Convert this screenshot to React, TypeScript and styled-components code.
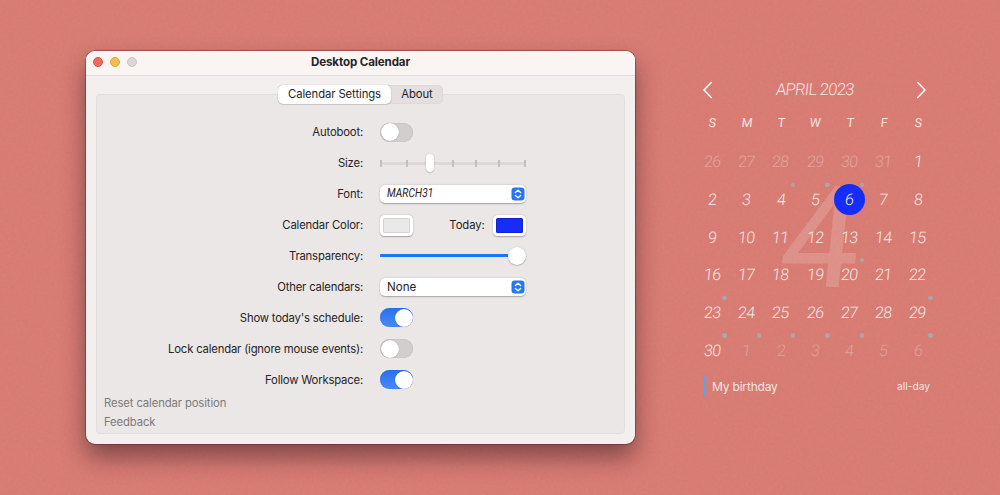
import React from 'react';
import styled, { createGlobalStyle } from 'styled-components';

const GlobalStyle = createGlobalStyle`
  * { box-sizing: border-box; }
  body { margin: 0; background: #d67970; }
`;

const Desktop = styled.main`
  position: relative;
  isolation: isolate;
  display: flex;
  align-items: flex-start;
  width: 1000px;
  height: 495px;
  padding-left: 86px;
  overflow: hidden;
  background: #d97a71;
  font-family: Inter, "Liberation Sans", sans-serif;
`;

const Grain = styled.svg`
  position: absolute;
  inset: 0;
  z-index: -1;
  width: 100%;
  height: 100%;
  opacity: 0.07;
`;

/* ---------- settings window ---------- */

const Window = styled.section`
  width: 549px;
  height: 393px;
  margin-top: 50.5px;
  flex: none;
  border-radius: 9px;
  background: #f3efee;
  box-shadow: 0 0 0 0.5px rgba(90, 20, 10, 0.6), 0 0 2px rgba(70, 10, 5, 0.3),
    0 13px 24px rgba(30, 15, 20, 0.48);
  color: #262425;
  font-size: 11.3px;
  letter-spacing: -0.18px;
`;

const TitleBar = styled.header`
  display: grid;
  grid-template-columns: 60px 1fr 60px;
  align-items: center;
  height: 25px;
  padding: 0 0 1px;
  border-bottom: 1px solid #e1dcdb;
  border-radius: 9px 9px 0 0;
  background: #faf5f2;
`;

const Lights = styled.div`
  display: flex;
  gap: 7px;
  padding-left: 6.5px;
`;

const Light = styled.span<{ $color: string; $edge: string }>`
  width: 10.3px;
  height: 10.3px;
  border-radius: 50%;
  border: 0.5px solid ${p => p.$edge};
  background: ${p => p.$color};
`;

const Title = styled.h1`
  margin: 0;
  text-align: center;
  font-size: 11.6px;
  font-weight: 700;
  letter-spacing: -0.13px;
`;

const Tabs = styled.div`
  display: flex;
  position: relative;
  width: 165px;
  height: 19px;
  margin: 9px 0 0 192px;
  border-radius: 5px;
  background: #e4dfde;
  box-shadow: inset 0 0 0 0.5px #d8d3d2;
`;

const Tab = styled.button<{ $active?: boolean; $width: number }>`
  width: ${p => p.$width}px;
  padding: 0;
  border: 0;
  border-radius: 5px;
  background: ${p => (p.$active ? '#fff' : 'transparent')};
  box-shadow: ${p => (p.$active ? '0 0 1px rgba(0,0,0,.35), 0 1px 1px rgba(0,0,0,.12)' : 'none')};
  color: #1f1e1f;
  font: inherit;
  letter-spacing: -0.1px;
`;

const Panel = styled.div`
  width: 529px;
  height: 340px;
  margin: -10px 0 0 10px;
  padding-top: 22.5px;
  border: 1px solid #e2dedd;
  border-radius: 4px;
  background: #ebe7e6;
`;

const Row = styled.div`
  display: grid;
  grid-template-columns: 266px 146px;
  column-gap: 17px;
  align-items: center;
  height: 30.9px;
`;

const Label = styled.label`
  text-align: right;
  white-space: nowrap;
`;

const Switch = styled.span<{ $on?: boolean }>`
  display: flex;
  justify-content: ${p => (p.$on ? 'flex-end' : 'flex-start')};
  width: 33px;
  height: 19px;
  padding: 0.5px;
  border-radius: 10px;
  background: ${p => (p.$on ? 'linear-gradient(#2a70ee, #478af7)' : '#d2cecd')};
  box-shadow: inset 0 0 1px ${p => (p.$on ? '#1558d4' : '#aaa5a4')};
  &::after {
    content: '';
    width: 18px;
    height: 18px;
    border-radius: 50%;
    background: #fff;
    box-shadow: 0 0 1px rgba(0, 0, 0, 0.4);
  }
`;

const StepTrack = styled.div`
  position: relative;
  display: flex;
  align-items: center;
  justify-content: space-between;
  height: 18px;
  background: linear-gradient(#dcd8d7, #dcd8d7) center / 100% 3px no-repeat;
`;

const Tick = styled.i`
  width: 1.6px;
  height: 7px;
  background: #c3bfbe;
  &:first-child { margin-right: 3px; }
  &:nth-child(7) { margin-left: 3px; }
`;

const StepThumb = styled.span`
  position: absolute;
  left: 46px;
  top: 0;
  width: 8px;
  height: 18px;
  border-radius: 4px;
  background: #fff;
  box-shadow: 0 0.5px 1.5px rgba(0, 0, 0, 0.35);
`;

const Popup = styled.div`
  display: flex;
  align-items: center;
  justify-content: space-between;
  height: 18px;
  padding: 0 1.5px 0 7px;
  border-radius: 5px;
  background: #fff;
  box-shadow: 0 0.5px 1.5px rgba(0, 0, 0, 0.3);
  font-size: 11.6px;
  letter-spacing: 0;
`;

const FontSample = styled.span`
  display: inline-block;
  font-family: Roboto, sans-serif;
  font-size: 12.5px;
  font-weight: 400;
  line-height: 16px;
  letter-spacing: 0;
  transform: translateY(-1px) skewX(-7deg) scaleX(0.8);
  transform-origin: left;
`;

const ColorRow = styled.div`
  display: flex;
  align-items: center;
  justify-content: space-between;
`;

const Well = styled.span<{ $color: string; $edge: string }>`
  width: 33px;
  height: 21px;
  border: 3px solid #fff;
  border-radius: 4.5px;
  background: ${p => p.$color};
  box-shadow: 0 0.5px 1.5px rgba(0, 0, 0, 0.3), inset 0 0 0 1px ${p => p.$edge};
`;

const TodayLabel = styled.span`
  margin-right: -28px;
  letter-spacing: -0.1px;
`;

const Slider = styled.div`
  display: flex;
  align-items: center;
  justify-content: flex-end;
  height: 18px;
  background: linear-gradient(#1877f5, #1877f5) center / 100% 3.4px no-repeat;
  border-radius: 9px;
`;

const Knob = styled.span`
  width: 18px;
  height: 18px;
  border-radius: 50%;
  background: #fff;
  box-shadow: 0 0.5px 1.5px rgba(0, 0, 0, 0.4);
`;

const Links = styled.nav`
  display: flex;
  flex-direction: column;
  margin-top: -1px;
  padding-left: 7px;
  color: #7d7a79;
  line-height: 19px;
  letter-spacing: -0.12px;
`;

/* ---------- desktop calendar ---------- */

const Calendar = styled.section`
  width: 240px;
  margin: 77px 0 0 60px;
  color: #f3e3e1;
`;

const Digital = styled.span`
  display: inline-block;
  font-family: Roboto, sans-serif;
  font-weight: 300;
  transform: skewX(-6deg);
`;

const MonthBar = styled.header`
  display: flex;
  align-items: center;
  justify-content: space-between;
  height: 26px;
  padding: 0 8px 0 7px;
`;

const MonthName = styled(Digital)`
  margin-bottom: 2px;
  font-size: 16.5px;
  letter-spacing: -0.7px;
`;

const Grid = styled.div`
  display: grid;
  grid-template-columns: repeat(7, 1fr);
  justify-items: center;
`;

const Weekday = styled(Digital)`
  margin-top: 9.5px;
  height: 30.5px;
  font-size: 12.5px;
  font-weight: 400;
  line-height: 19px;
`;

const Month = styled.div`
  position: relative;
`;

const MonthNumber = styled(Digital)`
  position: absolute;
  left: 86px;
  top: 12px;
  font-size: 142px;
  font-weight: 400;
  line-height: 167px;
  color: rgba(240, 215, 210, 0.24);
`;

const Day = styled.div<{ $muted?: boolean; $faint?: boolean }>`
  position: relative;
  display: grid;
  place-items: center;
  width: 31px;
  height: 37.7px;
  color: ${p => (p.$faint ? '#dfa09b' : p.$muted ? '#e0a59f' : '#f5e7e5')};
`;

const DayCircle = styled.span<{ $today?: boolean }>`
  width: 31px;
  height: 31px;
  border-radius: 50%;
  background: ${p => (p.$today ? '#162dfa' : 'transparent')};
  text-align: center;
`;

const DayText = styled(Digital)`
  font-size: 16px;
  line-height: 31px;
  letter-spacing: -0.5px;
`;

const Dot = styled.i`
  position: absolute;
  right: 0.8px;
  top: 2px;
  width: 4.4px;
  height: 4.4px;
  border-radius: 50%;
  background: #a9a7a8;
`;

const EventRow = styled.footer`
  display: flex;
  align-items: center;
  height: 21px;
  margin: 6.5px 5px 0 8px;
  color: #f4e4e2;
`;

const EventBar = styled.span`
  width: 3px;
  height: 20.5px;
  margin-right: 6px;
  border-radius: 1px;
  background: #55a6ed;
`;

const EventTitle = styled.span`
  flex: 1;
  font-size: 12px;
  letter-spacing: -0.18px;
`;

const EventTime = styled.span`
  font-size: 10.2px;
`;

const Stepper = () => (
  <svg width="14" height="14" viewBox="0 0 14 14" fill="none">
    <rect x=".5" y=".5" width="13" height="13" rx="3.3" fill="#2677f3" />
    <path d="M4.4 5.6 7 3.2l2.6 2.4M4.4 8.4 7 10.8l2.6-2.4" stroke="#fff" strokeWidth="1.4" strokeLinecap="round" strokeLinejoin="round" />
  </svg>
);

const Chevron = ({ d }: { d: string }) => (
  <svg width="11" height="18" viewBox="0 0 11 18" fill="none">
    <path d={d} stroke="#fff" strokeWidth="1.5" strokeLinecap="round" strokeLinejoin="round" />
  </svg>
);

const TODAY = 11;
const eventDays = new Set([9, 10, 11, 25, 28, 34, 35, 36, 37, 38, 39, 41]);
const days = Array.from({ length: 42 }, (_, i) => (i < 6 ? 26 + i : i > 35 ? i - 35 : i - 5));

export default function App() {
  return (
    <>
      <GlobalStyle />
      <Desktop>
        <Grain aria-hidden="true">
          <filter id="grain">
            <feTurbulence type="fractalNoise" baseFrequency="0.35" numOctaves="2" seed="4" />
            <feColorMatrix type="saturate" values="0" />
          </filter>
          <rect width="1000" height="495" filter="url(#grain)" />
        </Grain>

        <Window>
          <TitleBar>
            <Lights>
              <Light $color="#ed695d" $edge="#d9584d" />
              <Light $color="#f4be4e" $edge="#dfa63a" />
              <Light $color="#dcd7d7" $edge="#cbc6c6" />
            </Lights>
            <Title>Desktop Calendar</Title>
          </TitleBar>
          <Tabs>
            <Tab $active $width={113}>Calendar Settings</Tab>
            <Tab $width={52}>About</Tab>
          </Tabs>
          <Panel>
            <Row><Label>Autoboot:</Label><Switch /></Row>
            <Row>
              <Label>Size:</Label>
              <StepTrack>
                {[0, 1, 2, 3, 4, 5, 6].map(n => <Tick key={n} />)}
                <StepThumb />
              </StepTrack>
            </Row>
            <Row><Label>Font:</Label><Popup><FontSample>MARCH31</FontSample><Stepper /></Popup></Row>
            <Row>
              <Label>Calendar Color:</Label>
              <ColorRow>
                <Well $color="#e9e9e9" $edge="#d4d4d4" />
                <TodayLabel>Today:</TodayLabel>
                <Well $color="#162dfa" $edge="#1022cc" />
              </ColorRow>
            </Row>
            <Row><Label>Transparency:</Label><Slider><Knob /></Slider></Row>
            <Row><Label>Other calendars:</Label><Popup>None<Stepper /></Popup></Row>
            <Row><Label>Show today's schedule:</Label><Switch $on /></Row>
            <Row><Label>Lock calendar (ignore mouse events):</Label><Switch /></Row>
            <Row><Label>Follow Workspace:</Label><Switch $on /></Row>
            <Links><span>Reset calendar position</span><span>Feedback</span></Links>
          </Panel>
        </Window>

        <Calendar>
          <MonthBar>
            <Chevron d="M9.3 1.5 2 9l7.3 7.5" />
            <MonthName>APRIL 2023</MonthName>
            <Chevron d="M1.7 1.5 9 9l-7.3 7.5" />
          </MonthBar>
          <Grid>
            {['S', 'M', 'T', 'W', 'T', 'F', 'S'].map((d, i) => <Weekday key={i}>{d}</Weekday>)}
          </Grid>
          <Month>
            <MonthNumber>4</MonthNumber>
            <Grid>
              {days.map((d, i) => (
                <Day key={i} $muted={i < 6} $faint={i > 35}>
                  <DayCircle $today={i === TODAY}><DayText>{d}</DayText></DayCircle>
                  {eventDays.has(i) && <Dot />}
                </Day>
              ))}
            </Grid>
          </Month>
          <EventRow>
            <EventBar />
            <EventTitle>My birthday</EventTitle>
            <EventTime>all-day</EventTime>
          </EventRow>
        </Calendar>
      </Desktop>
    </>
  );
}
